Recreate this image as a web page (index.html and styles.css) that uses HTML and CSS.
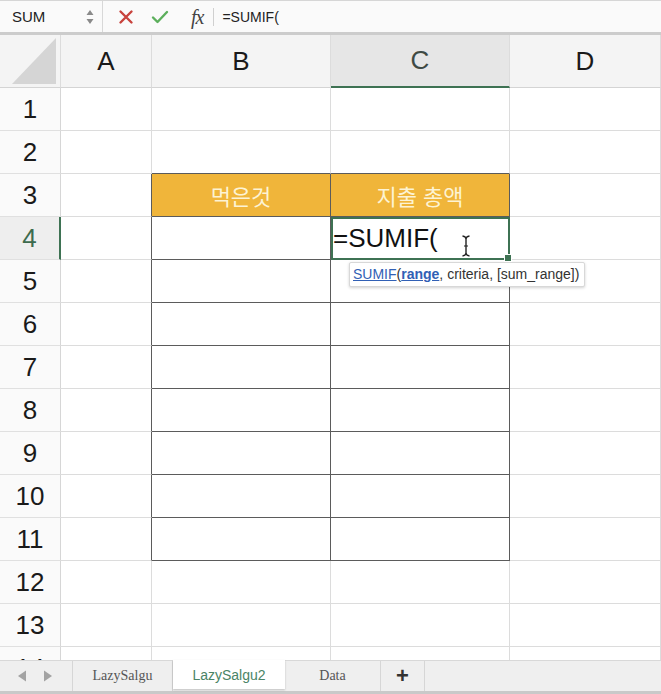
FILE: index.html
```html
<!DOCTYPE html>
<html lang="ko">
<head>
<meta charset="utf-8">
<title>Excel SUMIF</title>
<link rel="stylesheet" href="styles.css">
</head>
<body>
<div class="app">
  <div class="fbar">
    <div class="namebox">
      <span class="name">SUM</span>
      <svg class="spin" width="8" height="16" viewBox="0 0 8 16"><path d="M4 1 L7.5 6 L0.5 6 Z M4 15 L7.5 10 L0.5 10 Z" fill="#8a8a8a"/></svg>
    </div>
    <div class="fbtns">
      <svg class="ic" width="16" height="16" viewBox="0 0 16 16"><path d="M2.5 2.5 L13.5 13.5 M13.5 2.5 L2.5 13.5" stroke="#c8433d" stroke-width="2.4" stroke-linecap="round"/></svg>
      <svg class="ic" width="18" height="16" viewBox="0 0 18 16"><path d="M2 8.5 L6.5 13 L16 3" stroke="#5caf5c" stroke-width="2.4" fill="none" stroke-linecap="round" stroke-linejoin="round"/></svg>
      <span class="fx">fx</span>
      <span class="fsep"></span>
    </div>
    <div class="ftext">=SUMIF(</div>
  </div>

  <div class="sheet">
    <div class="grid">
      <div class="hd corner"><svg width="44" height="46" viewBox="0 0 44 46"><path d="M44 0 L44 46 L0 46 Z" fill="#d5d5d5"/></svg></div>
      <div class="hd col">A</div>
      <div class="hd col">B</div>
      <div class="hd col sel">C</div>
      <div class="hd col">D</div>

      <div class="rh">1</div><div class="c"></div><div class="c"></div><div class="c"></div><div class="c"></div>
      <div class="rh">2</div><div class="c"></div><div class="c tb"></div><div class="c tb"></div><div class="c"></div>
      <div class="rh">3</div><div class="c tl"></div><div class="c t org">먹은것</div><div class="c t org">지출 총액</div><div class="c"></div>
      <div class="rh rsel">4</div><div class="c tl"></div><div class="c t"></div>
      <div class="c t active">=SUMIF(
        <svg class="ibeam" width="10" height="22" viewBox="0 0 10 22"><path d="M1.5 1 Q5 1.5 5 4 L5 18 Q5 20.5 1.5 21 M8.5 1 Q5 1.5 5 4 M5 18 Q5 20.5 8.5 21" stroke="#222" stroke-width="1.4" fill="none"/><path d="M3 11 L7 11" stroke="#222" stroke-width="1"/></svg>
        <div class="tip"><span class="lk">SUMIF</span>(<b class="lk">range</b>, criteria, [sum_range])</div>
      </div>
      <div class="c"></div>
      <div class="rh">5</div><div class="c tl"></div><div class="c t"></div><div class="c t"></div><div class="c"></div>
      <div class="rh">6</div><div class="c tl"></div><div class="c t"></div><div class="c t"></div><div class="c"></div>
      <div class="rh">7</div><div class="c tl"></div><div class="c t"></div><div class="c t"></div><div class="c"></div>
      <div class="rh">8</div><div class="c tl"></div><div class="c t"></div><div class="c t"></div><div class="c"></div>
      <div class="rh">9</div><div class="c tl"></div><div class="c t"></div><div class="c t"></div><div class="c"></div>
      <div class="rh">10</div><div class="c tl"></div><div class="c t"></div><div class="c t"></div><div class="c"></div>
      <div class="rh">11</div><div class="c tl"></div><div class="c t"></div><div class="c t"></div><div class="c"></div>
      <div class="rh">12</div><div class="c"></div><div class="c"></div><div class="c"></div><div class="c"></div>
      <div class="rh">13</div><div class="c"></div><div class="c"></div><div class="c"></div><div class="c"></div>
      <div class="rh">14</div><div class="c"></div><div class="c"></div><div class="c"></div><div class="c"></div>
    </div>
  </div>

  <div class="tabbar">
    <div class="nav">
      <svg width="10" height="12" viewBox="0 0 10 12"><path d="M9 0.5 L9 11.5 L1 6 Z" fill="#a3a3a3"/></svg>
      <svg width="10" height="12" viewBox="0 0 10 12"><path d="M1 0.5 L1 11.5 L9 6 Z" fill="#a3a3a3"/></svg>
    </div>
    <div class="tab">LazySalgu</div>
    <div class="tab on">LazySalgu2</div>
    <div class="tab">Data</div>
    <div class="tab plus">+</div>
  </div>
</div>
</body>
</html>
```
FILE: styles.css
```css
* { box-sizing: border-box; }
html, body { margin: 0; padding: 0; background: #fff; }
body { width: 661px; height: 694px; overflow: hidden; font-family: "Liberation Sans", Arial, sans-serif; }
.app { width: 661px; height: 694px; display: flex; flex-direction: column; }

.fbar {
  height: 35px; flex: none;
  display: flex; align-items: center;
  background: #fafafa;
  border-top: 1px solid #d6d6d6;
  border-bottom: 3px solid #cccccc;
}
.namebox {
  width: 103px; height: 100%;
  display: flex; align-items: center; justify-content: space-between;
  padding: 0 8px 0 12px;
  border-right: 1px solid #d8d8d8;
}
.name { font-size: 15px; color: #222; }
.spin { display: block; }
.fbtns { display: flex; align-items: center; height: 100%; padding-left: 15px; gap: 0; }
.fbtns .ic { display: block; }
.fbtns .ic:first-child { margin-right: 17px; }
.fx { font-family: "Liberation Serif", "Times New Roman", serif; font-style: italic; font-size: 20px; color: #444; margin-left: 22px; margin-right: 10px; letter-spacing: -1px; line-height: 1; }
.fsep { width: 1px; height: 18px; background: #d0d0d0; }
.ftext { margin-left: 8px; font-size: 14px; color: #222; }

.sheet { height: 625px; flex: none; overflow: hidden; }
.grid {
  display: grid;
  grid-template-columns: 61px 91px 179px 179px 151px;
  grid-template-rows: 53px repeat(14, 43px);
}
.hd {
  background: #f4f4f4;
  border-right: 1px solid #dcdcdc;
  border-bottom: 1px solid #d4d4d4;
  display: flex; align-items: center; justify-content: center;
  font-size: 26px; color: #1a1a1a;
}
.hd.corner { justify-content: flex-end; align-items: flex-end; padding: 0 4px 3px 0; }
.hd.corner svg { display: block; }
.hd.sel { background: #e6e6e6; color: #3f4a44; border-bottom: 2px solid #3e7253; }
.rh {
  background: #fafafa;
  border-right: 1px solid #d6d6d6;
  border-bottom: 1px solid #e0e0e0;
  display: flex; align-items: center; justify-content: center;
  font-size: 26px; color: #1a1a1a;
}
.rh.rsel { background: #eeeeee; color: #3d6b4e; border-right: 2px solid #3e7253; }
.c {
  background: #fff;
  border-right: 1px solid #dcdcdc;
  border-bottom: 1px solid #dcdcdc;
}
.c.tb { border-bottom-color: #5b5b5b; }
.c.tl { border-right-color: #5b5b5b; }
.c.t { border-right-color: #5b5b5b; border-bottom-color: #5b5b5b; }
.c.org {
  background: #f0b53a;
  display: flex; align-items: center; justify-content: center;
  font-family: "Noto Sans CJK KR", "Noto Sans", sans-serif;
  font-size: 22px; color: #fdf3d3;
}
.c.active {
  position: relative;
  outline: 2px solid #3e7253; outline-offset: -2px;
  font-size: 26px; color: #111;
  display: flex; align-items: center; padding-left: 2px;
  z-index: 2;
}
.c.active::after {
  content: ""; position: absolute; right: -3px; bottom: -3px;
  width: 6px; height: 6px; background: #3e7253; border: 1px solid #fff;
}
.ibeam { position: absolute; left: 130px; top: 18px; }
.tip {
  position: absolute; left: 18px; top: 45px;
  white-space: nowrap;
  background: #fff;
  border: 1px solid #d8d8d8;
  box-shadow: 0 1px 3px rgba(0,0,0,0.18);
  border-radius: 2px;
  padding: 3px 5px 4px 3px;
  font-size: 14px; color: #333;
  line-height: 16px;
}
.tip .lk { color: #3160b5; text-decoration: underline; }
.tip b.lk { font-weight: bold; }

.tabbar {
  flex: 1;
  background: #efefef;
  border-top: 1px solid #d8d8d8;
  border-bottom: 3px solid #c9c9c9;
  display: flex; align-items: stretch;
}
.nav { width: 73px; display: flex; align-items: center; gap: 16px; padding-left: 17px; border-right: 1px solid #d6d6d6; }
.nav svg { display: block; }
.tab {
  display: flex; align-items: center; justify-content: center;
  font-family: "Liberation Serif", "Times New Roman", serif;
  font-size: 14px; color: #555;
  border-right: 1px solid #d6d6d6;
  width: 100px;
}
.tab.on {
  width: 112px;
  background: #fff;
  color: #4a8466;
  font-family: "Liberation Sans", Arial, sans-serif;
  margin-top: -1px;
  margin-bottom: 2px;
  box-shadow: 0 1px 2px rgba(0,0,0,0.2);
  border-right: none;
}
.tab:nth-of-type(4) { width: 96px; }
.tab.plus { width: 44px; font-family: "Liberation Sans", Arial, sans-serif; font-size: 22px; font-weight: bold; color: #333; }
```
